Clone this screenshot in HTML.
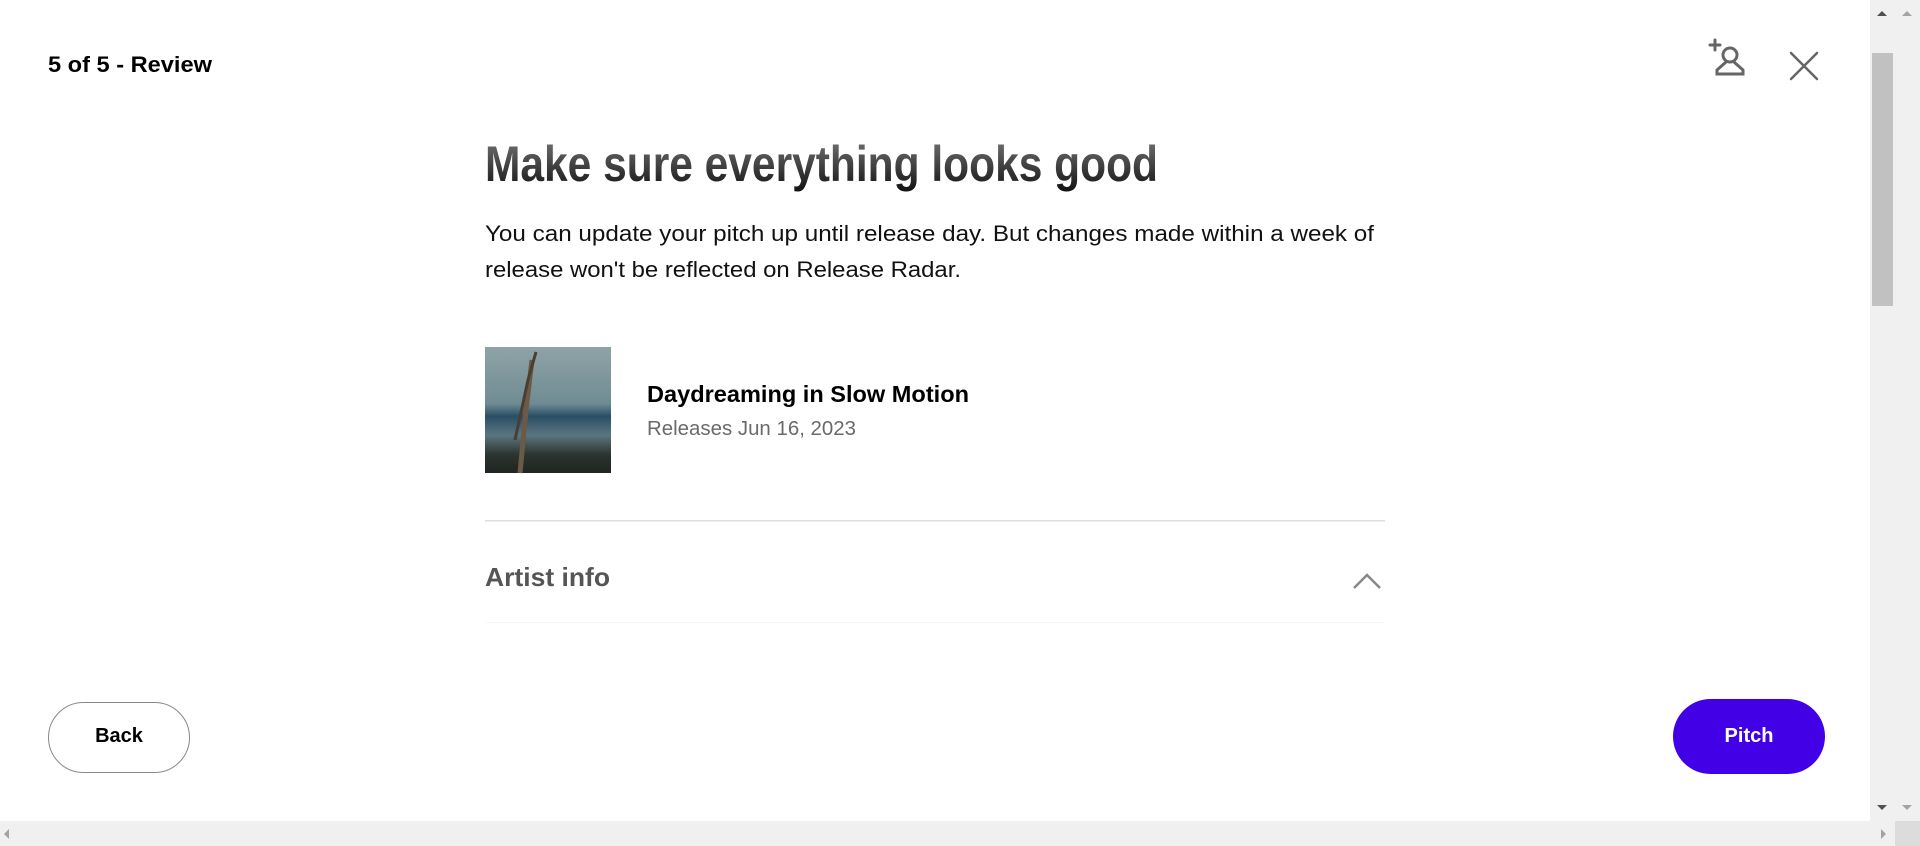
<!DOCTYPE html>
<html><head><meta charset="utf-8"><style>
html,body{margin:0;padding:0;width:1920px;height:846px;overflow:hidden;background:#fff;font-family:"Liberation Sans",sans-serif}
svg{position:absolute;left:0;top:0}
</style></head><body>
<svg width="1920" height="846" viewBox="0 0 1920 846" xmlns="http://www.w3.org/2000/svg">
<defs>
<linearGradient id="hg" x1="0" y1="0" x2="0" y2="1">
<stop offset="0" stop-color="#777"/><stop offset="1" stop-color="#111"/>
</linearGradient>
<linearGradient id="sky" x1="0" y1="0" x2="0" y2="1">
<stop offset="0" stop-color="#8fa3a6"/><stop offset="0.45" stop-color="#6f8c93"/>
<stop offset="0.55" stop-color="#2a4e66"/><stop offset="0.7" stop-color="#5b7680"/>
<stop offset="0.85" stop-color="#2d3530"/><stop offset="1" stop-color="#1f2520"/>
</linearGradient>
</defs>
<text x="48" y="72" font-size="22" font-weight="bold" fill="#000" textLength="164" lengthAdjust="spacingAndGlyphs">5 of 5 - Review</text>
<g stroke="#666" stroke-width="3" fill="none" stroke-linecap="round">
<path d="M1710 45h10M1715 40v10"/>
<circle cx="1730" cy="55" r="7"/>
<path d="M1726 62 L1717 70 V74 H1743 V70 L1734 62"/>
<path d="M1791 53 L1817 79 M1817 53 L1791 79" stroke-width="2.5"/>
</g>
<text x="485" y="181" font-size="50" font-weight="bold" fill="url(#hg)" textLength="673" lengthAdjust="spacingAndGlyphs">Make sure everything looks good</text>
<text x="485" y="241" font-size="22" fill="#111" textLength="889" lengthAdjust="spacingAndGlyphs">You can update your pitch up until release day. But changes made within a week of</text>
<text x="485" y="277" font-size="22" fill="#111" textLength="476" lengthAdjust="spacingAndGlyphs">release won't be reflected on Release Radar.</text>
<rect x="485" y="347" width="126" height="126" fill="url(#sky)"/>
<path d="M520 473 L526 410 L532 360" stroke="#6b5a48" stroke-width="5" fill="none"/>
<path d="M515 440 L528 380 L536 352" stroke="#4a3e33" stroke-width="3" fill="none"/>
<text x="647" y="402" font-size="23" font-weight="bold" fill="#000" textLength="322" lengthAdjust="spacingAndGlyphs">Daydreaming in Slow Motion</text>
<text x="647" y="435" font-size="20" fill="#6a6a6a" textLength="209" lengthAdjust="spacingAndGlyphs">Releases Jun 16, 2023</text>
<rect x="485" y="520" width="900" height="1.5" fill="#ddd"/>
<text x="485" y="586" font-size="26" font-weight="bold" fill="#555" textLength="125" lengthAdjust="spacingAndGlyphs">Artist info</text>
<path d="M1354 588 L1367 575 L1380 588" stroke="#888" stroke-width="2.5" fill="none"/>
<rect x="485" y="622" width="900" height="1" fill="#f6f6f6"/>
<rect x="48.5" y="702.5" width="141" height="70" rx="35" fill="#fff" stroke="#888" stroke-width="1"/>
<text x="119" y="742" font-size="20" font-weight="bold" fill="#000" text-anchor="middle">Back</text>
<rect x="1673" y="699" width="152" height="75" rx="37.5" fill="#4100e6"/>
<text x="1749" y="742" font-size="20" font-weight="bold" fill="#fff" text-anchor="middle">Pitch</text>
<rect x="1870" y="0" width="50" height="821" fill="#f0f0f0"/>
<rect x="1872" y="53" width="21" height="253" fill="#c1c1c1"/>
<path d="M1877 16 L1882 11 L1887 16Z" fill="#505050"/>
<path d="M1902 16 L1907 11 L1912 16Z" fill="#a3a3a3"/>
<path d="M1877 805 L1882 810 L1887 805Z" fill="#505050"/>
<path d="M1902 805 L1907 810 L1912 805Z" fill="#a3a3a3"/>
<rect x="0" y="821" width="1920" height="25" fill="#f0f0f0"/>
<rect x="1895" y="821" width="25" height="25" fill="#dcdcdc"/>
<path d="M9 829 L4 834 L9 839Z" fill="#a3a3a3"/>
<path d="M1881 829 L1886 834 L1881 839Z" fill="#a3a3a3"/>
</svg>
</body></html>
